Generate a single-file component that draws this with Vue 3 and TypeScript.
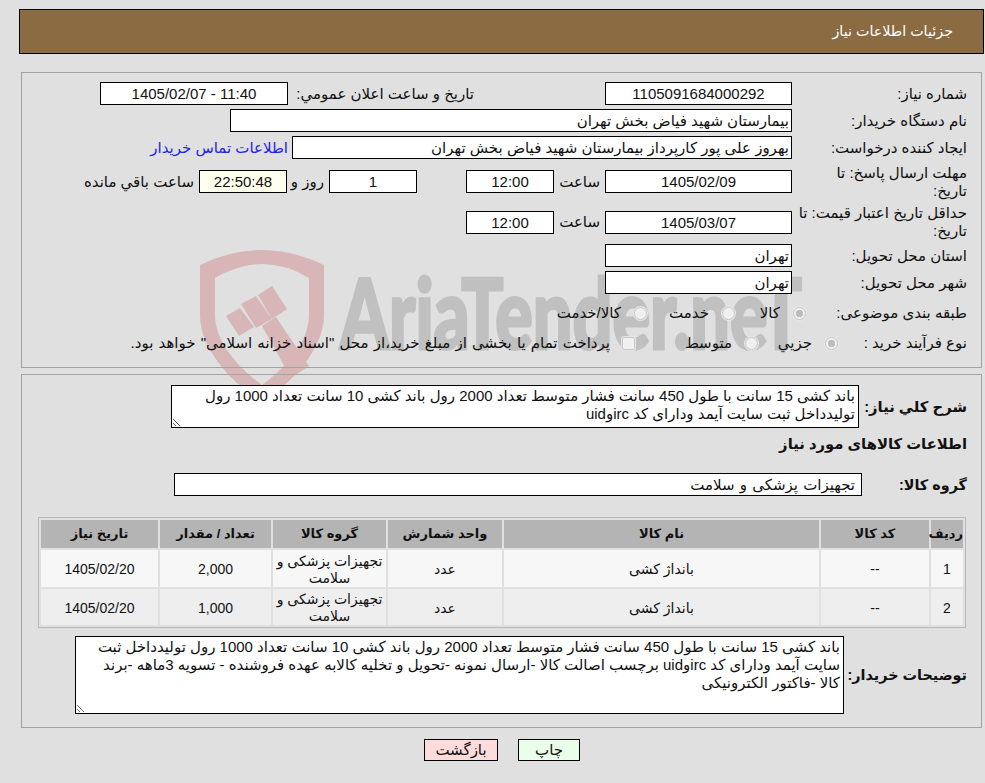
<script setup lang="ts">
const summary = 'باند کشی 15 سانت با طول 450 سانت فشار متوسط تعداد 2000 رول باند کشی 10 سانت تعداد 1000 رول تولیدداخل ثبت سایت آیمد ودارای کد ircوuid'
const notes = summary + ' برچسب اصالت کالا -ارسال نمونه -تحویل و تخلیه کالابه عهده فروشنده - تسویه 3ماهه -برند کالا -فاکتور الکترونیکی'
const columns = ['ردیف', 'کد کالا', 'نام کالا', 'واحد شمارش', 'گروه کالا', 'تعداد / مقدار', 'تاریخ نیاز']
const widths = [32, 108, 315, 114, 113, 111, 117]
const items = [
  { id: 1, code: '--', name: 'بانداژ کشی', unit: 'عدد', group: 'تجهیزات پزشکی و سلامت', qty: '2,000', date: '1405/02/20' },
  { id: 2, code: '--', name: 'بانداژ کشی', unit: 'عدد', group: 'تجهیزات پزشکی و سلامت', qty: '1,000', date: '1405/02/20' },
]
</script>

<template>
  <div class="page" dir="rtl">
    <svg class="watermark" width="985" height="420" viewBox="0 0 985 420" aria-hidden="true">
      <g fill="#d8b6b8">
        <path fill-rule="evenodd" d="M200 265 Q262 235 324 265 L324 315 C324 350 290 385 262 402 C234 385 200 350 200 315 Z M215 278 Q262 250 309 278 L309 315 C309 345 280 372 262 385 C244 372 215 345 215 315 Z" />
        <polygon points="226,316 240,308 254,327 239,336" />
        <polygon points="241,304 256,296 272,319 256,328" />
        <polygon points="258,295 272,286 287,309 272,319" />
        <polygon points="262,326 276,317 309,366 291,378" />
      </g>
      <text x="340" y="349" fill="#c0c0c0" stroke="#c0c0c0" stroke-width="3" font-family="Lato, sans-serif" font-weight="900" font-size="98" textLength="462" lengthAdjust="spacingAndGlyphs" direction="ltr">AriaTender.neT</text>
    </svg>

    <header class="title-bar">جزئیات اطلاعات نیاز</header>

    <section class="panel first">
      <div class="row h23">
        <label class="lbl">شماره نیاز:</label>
        <input class="box w187 center" readonly value="1105091684000292" />
        <label class="lbl announce">تاریخ و ساعت اعلان عمومي:</label>
        <input class="box w188 center" dir="ltr" readonly value="1405/02/07 - 11:40" />
      </div>
      <div class="row h23">
        <label class="lbl">نام دستگاه خریدار:</label>
        <input class="box w562" readonly value="بیمارستان شهید فیاض بخش تهران" />
      </div>
      <div class="row h23">
        <label class="lbl">ایجاد کننده درخواست:</label>
        <input class="box w500" readonly value="بهروز علی پور کارپرداز بیمارستان شهید فیاض بخش تهران" />
        <a class="contact">اطلاعات تماس خریدار</a>
      </div>
      <div class="row h37">
        <label class="lbl nowrap">مهلت ارسال پاسخ: تا<br />تاریخ:</label>
        <input class="box w187 center" readonly value="1405/02/09" />
        <span class="time-lbl">ساعت</span>
        <input class="box w88 center" readonly value="12:00" />
        <input class="box w88 center days" readonly value="1" />
        <span class="days-lbl">روز و</span>
        <input class="box w88 center timer" readonly value="22:50:48" />
        <span class="left-lbl">ساعت باقي مانده</span>
      </div>
      <div class="row h36">
        <label class="lbl nowrap">حداقل تاریخ اعتبار قیمت: تا<br />تاریخ:</label>
        <input class="box w187 center" readonly value="1405/03/07" />
        <span class="time-lbl">ساعت</span>
        <input class="box w88 center" readonly value="12:00" />
      </div>
      <div class="row h23">
        <label class="lbl">استان محل تحویل:</label>
        <input class="box w187" readonly value="تهران" />
      </div>
      <div class="row h23">
        <label class="lbl">شهر محل تحویل:</label>
        <input class="box w187" readonly value="تهران" />
      </div>
      <div class="row choice-row cat">
        <label class="lbl cat-lbl">طبقه بندی موضوعی:</label>
        <span class="choice w71"><i class="radio on"></i>کالا</span>
        <span class="choice w88b"><i class="radio"></i>خدمت</span>
        <span class="choice"><i class="radio"></i>کالا/خدمت</span>
      </div>
      <div class="row choice-row proc">
        <label class="lbl proc-lbl">نوع فرآیند خرید :</label>
        <span class="choice w80"><i class="radio on"></i>جزیي</span>
        <span class="choice w123b"><i class="radio"></i>متوسط</span>
        <span class="choice long"><i class="check"></i>پرداخت تمام یا بخشی از مبلغ خرید،از محل "اسناد خزانه اسلامی" خواهد بود.</span>
      </div>
    </section>

    <section class="panel second">
      <div class="row">
        <label class="lbl strong w108">شرح کلي نیاز:</label>
        <textarea class="area summary" readonly :value="summary"></textarea>
      </div>
      <h3 class="heading">اطلاعات کالاهای مورد نیاز</h3>
      <div class="row h23 group-row">
        <label class="lbl strong tight w105">گروه کالا:</label>
        <input class="box w688" readonly value="تجهیزات پزشکی و سلامت" />
      </div>
      <table class="items">
        <colgroup>
          <col v-for="w in widths" :key="w" :style="{ width: w + 'px' }" />
        </colgroup>
        <thead>
          <tr><th v-for="c in columns" :key="c">{{ c }}</th></tr>
        </thead>
        <tbody>
          <tr v-for="it in items" :key="it.id">
            <td>{{ it.id }}</td>
            <td>{{ it.code }}</td>
            <td>{{ it.name }}</td>
            <td>{{ it.unit }}</td>
            <td>{{ it.group }}</td>
            <td>{{ it.qty }}</td>
            <td>{{ it.date }}</td>
          </tr>
        </tbody>
      </table>
      <div class="row notes-row">
        <label class="lbl strong tight w123">توضیحات خریدار:</label>
        <textarea class="area notes" readonly :value="notes"></textarea>
      </div>
    </section>

    <div class="actions">
      <button class="btn print">چاپ</button>
      <button class="btn back">بازگشت</button>
    </div>
  </div>
</template>

<style>
html, body { margin: 0; background: #e0e0e0; }
</style>

<style scoped>
.page {
  position: relative;
  width: 985px;
  height: 783px;
  box-sizing: border-box;
  padding-top: 9px;
  overflow: hidden;
  background: #e0e0e0;
  color: #111;
  font: 15px/18px "Liberation Sans", "DejaVu Sans", sans-serif;
}
.watermark { position: absolute; left: 0; top: 0; }
.title-bar {
  position: relative;
  box-sizing: border-box;
  height: 45px;
  margin: 0 1px 0 19px;
  border: 1px solid #000;
  padding: 0 30px;
  background: #8b6b41;
  color: #fff;
  line-height: 43px;
  font-size: 14.3px;
}
.panel {
  position: relative;
  box-sizing: border-box;
  margin: 0 3px 0 21px;
  border: 1px solid #a3a3a3;
  padding: 0 14px;
}
.first { margin-top: 18px; height: 296px; padding-top: 9px; display: flex; flex-direction: column; gap: 4px; }
.second { margin-top: 6px; height: 354px; padding-top: 10px; }
.row { display: flex; align-items: center; }
.h23 { height: 23px; }
.h37 { height: 37px; }
.h36 { height: 36px; }
.lbl { flex: none; width: 175px; box-sizing: border-box; padding-left: 6px; }
.nowrap { white-space: nowrap; }
.strong { font-weight: 700; font-size: 14.8px; padding-left: 0; }
.tight { font-size: 14.4px; }
.w108 { width: 108px; }
.w105 { width: 105px; }
.w123 { width: 123px; }
.box {
  flex: none;
  box-sizing: border-box;
  height: 23px;
  margin: 0;
  border: 1px solid #000;
  border-radius: 0;
  padding: 0 2px;
  background: #fff;
  color: #111;
  font: inherit;
  text-align: right;
  outline: none;
}
.center { text-align: center; }
.w187 { width: 187px; }
.w188 { width: 188px; margin-right: 4px; }
.w562 { width: 562px; }
.w500 { width: 500px; }
.w88 { width: 88px; }
.w688 { width: 688px; padding-right: 6px; word-spacing: 1px; }
.announce { width: 182px; margin-right: 131px; padding: 0; }
.contact { margin-right: 4px; color: #2222ee; white-space: nowrap; }
.time-lbl { flex: none; width: 51px; padding-right: 5px; box-sizing: border-box; }
.days { margin-right: 49px; }
.days-lbl { flex: none; width: 42px; padding-right: 5px; box-sizing: border-box; }
.timer { background: #ffffee; }
.left-lbl { flex: none; margin-right: 5px; white-space: nowrap; }
.choice-row { flex: none; }
.cat { height: 30px; }
.proc { height: 22px; }
.cat-lbl { width: 161px; padding: 0; white-space: nowrap; }
.proc-lbl { width: 129px; padding: 0; white-space: nowrap; }
.choice { flex: none; display: flex; align-items: center; white-space: nowrap; }
.long { word-spacing: 1px; }
.w71 { width: 71px; }
.w88b { width: 88px; }
.w80 { width: 80px; }
.w123b { width: 123px; }
.radio, .check {
  flex: none;
  box-sizing: border-box;
  width: 13px;
  height: 13px;
  margin-left: 13px;
  border: 1px solid #c8c8c8;
  background: #f0f0f0;
  box-shadow: 0 0 0 1px #e6e6e6;
}
.radio { border-radius: 50%; }
.radio.on { background: radial-gradient(circle, #bdbdbd 0 3.5px, #f0f0f0 4px); }
.check { border-radius: 2px; margin-left: 12px; }
.area {
  flex: none;
  display: block;
  box-sizing: border-box;
  margin: 0;
  border: 1px solid #000;
  border-radius: 0;
  padding: 1px 3px;
  background: #fff;
  color: #111;
  font: inherit;
  outline: none;
  overflow: hidden;
  resize: both;
}
.summary { width: 688px; height: 43px; }
.notes { width: 769px; height: 78px; }
.heading { margin: 7px 0 0; height: 18px; font-size: 14.8px; line-height: 18px; font-weight: 700; }
.group-row { margin-top: 20px; }
.items {
  table-layout: fixed;
  width: 928px;
  height: 111px;
  margin: 21px 1px 0 0;
  border: 1px solid #b8b8b8;
  border-collapse: separate;
  border-spacing: 2px;
}
.items th { height: 28px; padding: 0; background: #b4b4b4; font-size: 13px; font-weight: 700; }
.items td { box-sizing: border-box; padding: 2px 0 0; text-align: center; font-size: 14px; line-height: 17px; }
.items tbody tr:nth-child(1) td { height: 37px; background: #f7f7f7; }
.items tbody tr:nth-child(2) td { height: 36px; background: #eeeeee; }
.notes-row { margin-top: 8px; }
.actions { position: relative; display: flex; gap: 20px; margin-top: 11px; padding-right: 405px; }
.btn {
  box-sizing: border-box;
  height: 22px;
  margin: 0;
  border: 1px solid #000;
  border-radius: 0;
  padding: 0;
  color: #111;
  font: inherit;
}
.print { width: 62px; background: #eaffea; }
.back { width: 74px; background: #ffdcdc; }
</style>
